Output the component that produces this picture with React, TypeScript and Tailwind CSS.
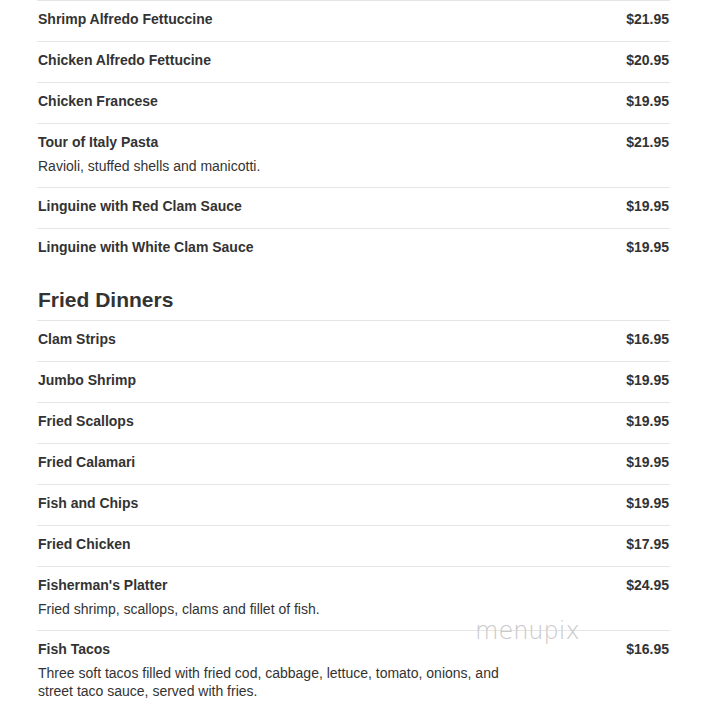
import React from "react";

interface MenuItem {
  name: string;
  price: string;
  desc?: string;
}

const pasta: MenuItem[] = [
  { name: "Shrimp Alfredo Fettuccine", price: "$21.95" },
  { name: "Chicken Alfredo Fettucine", price: "$20.95" },
  { name: "Chicken Francese", price: "$19.95" },
  { name: "Tour of Italy Pasta", price: "$21.95", desc: "Ravioli, stuffed shells and manicotti." },
  { name: "Linguine with Red Clam Sauce", price: "$19.95" },
  { name: "Linguine with White Clam Sauce", price: "$19.95" },
];

const fried: MenuItem[] = [
  { name: "Clam Strips", price: "$16.95" },
  { name: "Jumbo Shrimp", price: "$19.95" },
  { name: "Fried Scallops", price: "$19.95" },
  { name: "Fried Calamari", price: "$19.95" },
  { name: "Fish and Chips", price: "$19.95" },
  { name: "Fried Chicken", price: "$17.95" },
  { name: "Fisherman's Platter", price: "$24.95", desc: "Fried shrimp, scallops, clams and fillet of fish." },
  {
    name: "Fish Tacos",
    price: "$16.95",
    desc: "Three soft tacos filled with fried cod, cabbage, lettuce, tomato, onions, and street taco sauce, served with fries.",
  },
];

const Row: React.FC<{ item: MenuItem }> = ({ item }) => (
  <div className="flex border-t border-[#e6e6e6] pt-[8px] pb-[12px]">
    <div className="w-3/4 pl-px">
      <div className="text-[14px] leading-[20px] font-bold">{item.name}</div>
      {item.desc ? (
        <div className="mt-[5px] text-[14px] leading-[18px]">{item.desc}</div>
      ) : null}
    </div>
    <div className="ml-auto pr-px text-[14px] leading-[20px] font-bold">{item.price}</div>
  </div>
);

export default function App() {
  return (
    <div
      className="relative min-h-[711px] w-[708px] overflow-hidden bg-white text-[#333]"
      style={{ fontFamily: '"Liberation Sans", Arial, sans-serif' }}
    >
      <div className="ml-[37px] w-[633px]">
        {pasta.map((item) => (
          <Row key={item.name} item={item} />
        ))}
        <h2 className="mt-[19px] pb-[8px] text-[21px] leading-[24px] font-bold">
          <span className="pl-px">Fried Dinners</span>
        </h2>
        {fried.map((item) => (
          <Row key={item.name} item={item} />
        ))}
      </div>
      <div
        className="pointer-events-none absolute left-[475px] top-[613px] text-[24px] font-extralight text-[#c8c8c8]"
        style={{ fontFamily: '"DejaVu Sans", sans-serif' }}
      >
        menupix
      </div>
    </div>
  );
}
